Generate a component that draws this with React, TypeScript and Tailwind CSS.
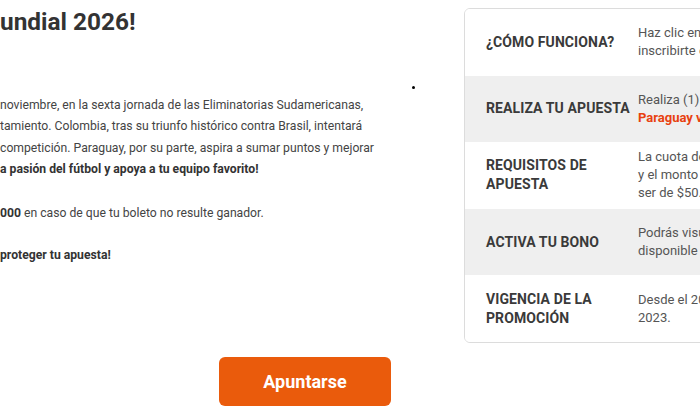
import React from "react";

const rows = [
  { label: "¿CÓMO FUNCIONA?", gray: false, value: <>Haz clic en el botón "Apuntarse" para<br />inscribirte en la promoción.</> },
  { label: "REALIZA TU APUESTA", gray: true, value: <>Realiza (1) apuesta en el partido<br /><span className="font-bold text-[#e8410f]">Paraguay vs Colombia</span></> },
  { label: <>REQUISITOS DE<br />APUESTA</>, gray: false, value: <>La cuota debe ser igual o mayor a 1.50<br />y el monto mínimo de la apuesta debe<br />ser de $50.000.</> },
  { label: "ACTIVA TU BONO", gray: true, value: <>Podrás visualizar tu bono<br />disponible en tu cuenta.</> },
  { label: <>VIGENCIA DE LA<br />PROMOCIÓN</>, gray: false, value: <>Desde el 20 de noviembre de<br />2023.</> },
];

export default function App() {
  return (
    <div className="relative h-[416px] w-[700px] overflow-hidden bg-white font-['Roboto',sans-serif] text-[#444]">
      <div className="flex">
        <div className="w-[464px] shrink-0">
          <h1 className="mt-[6px] whitespace-nowrap text-[24.4px] font-bold leading-[32px] text-[#333]">undial 2026!</h1>
          <div className="mt-[57px] whitespace-nowrap text-[12.2px] leading-[21.4px]">
            <div>noviembre, en la sexta jornada de las Eliminatorias Sudamericanas,</div>
            <div>tamiento. Colombia, tras su triunfo histórico contra Brasil, intentará</div>
            <div>competición. Paraguay, por su parte, aspira a sumar puntos y mejorar</div>
            <div className="font-bold text-[#333]">a pasión del fútbol y apoya a tu equipo favorito!</div>
            <div className="mt-[22px]"><span className="font-bold text-[#333]">000</span> en caso de que tu boleto no resulte ganador.</div>
            <div className="mt-[21px] font-bold text-[#333]">proteger tu apuesta!</div>
          </div>
          <div className="mt-[91px] flex pl-[219px]">
            <button className="h-[49px] w-[172px] rounded-[6px] bg-[#ea5b0c] text-[18px] font-bold text-white">Apuntarse</button>
          </div>
        </div>
        <div className="mt-[8px] w-[420px] shrink-0 self-start overflow-hidden rounded-[6px] border border-[#dcdcdc]">
          {rows.map((r, i) => (
            <div key={i} className={`flex h-[66.6px] items-center ${r.gray ? "bg-[#efefef]" : "bg-white"}`}>
              <div className="w-[173px] shrink-0 pl-[21px] text-[14px] font-bold leading-[19px] tracking-[0.1px] text-[#3a3a3a]">{r.label}</div>
              <div className="whitespace-nowrap text-[13px] leading-[18px] text-[#555]">{r.value}</div>
            </div>
          ))}
        </div>
      </div>
      <div className="absolute left-[412px] top-[86px] h-[3px] w-[3px] rounded-full bg-black" />
    </div>
  );
}
